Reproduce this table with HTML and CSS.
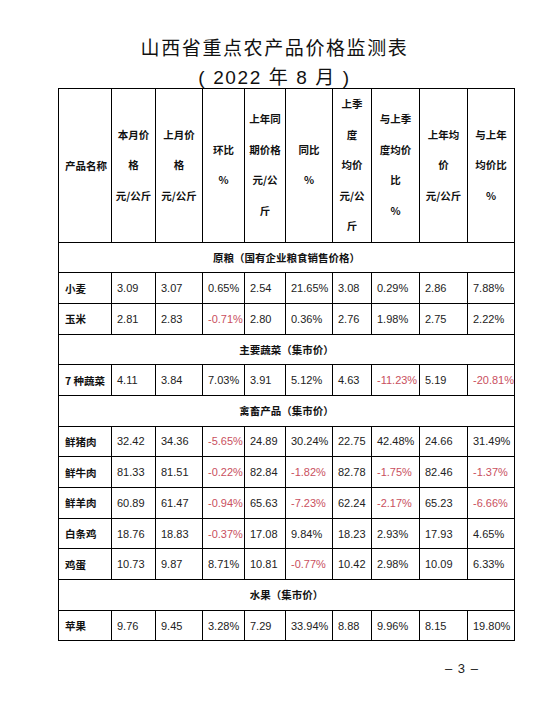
FILE: index.html
```html
<!DOCTYPE html>
<html lang="zh-CN">
<head>
<meta charset="utf-8">
<title>山西省重点农产品价格监测表</title>
<link rel="stylesheet" href="styles.css">
</head>
<body>
<div class="page">
  <div class="title">
    <div class="t1">山西省重点农产品价格监测表</div>
    <div class="t2">( 2022 年 8 月 )</div>
  </div>
  <table class="grid">
    <colgroup>
      <col class="c53"><col class="c44"><col class="c47"><col class="c42"><col class="c41">
      <col class="c47"><col class="c39"><col class="c48"><col class="c48"><col class="c47">
    </colgroup>
    <thead>
      <tr class="head">
        <th class="name">产品名称</th>
        <th><span>本月价</span><span>格</span><span>元/公斤</span></th>
        <th><span>上月价</span><span>格</span><span>元/公斤</span></th>
        <th><span>环比</span><span>%</span></th>
        <th><span>上年同</span><span>期价格</span><span>元/公</span><span>斤</span></th>
        <th><span>同比</span><span>%</span></th>
        <th><span>上季</span><span>度</span><span>均价</span><span>元/公</span><span>斤</span></th>
        <th><span>与上季</span><span>度均价</span><span>比</span><span>%</span></th>
        <th><span>上年均</span><span>价</span><span>元/公斤</span></th>
        <th><span>与上年</span><span>均价比</span><span>%</span></th>
      </tr>
    </thead>
    <tbody>
      <tr class="section"><td colspan="10">原粮（国有企业粮食销售价格）</td></tr>
      <tr><td class="name">小麦</td><td>3.09</td><td>3.07</td><td>0.65%</td><td>2.54</td><td>21.65%</td><td>3.08</td><td>0.29%</td><td>2.86</td><td>7.88%</td></tr>
      <tr><td class="name">玉米</td><td>2.81</td><td>2.83</td><td class="neg">-0.71%</td><td>2.80</td><td>0.36%</td><td>2.76</td><td>1.98%</td><td>2.75</td><td>2.22%</td></tr>
      <tr class="section"><td colspan="10">主要蔬菜（集市价）</td></tr>
      <tr><td class="name">7 种蔬菜</td><td>4.11</td><td>3.84</td><td>7.03%</td><td>3.91</td><td>5.12%</td><td>4.63</td><td class="neg">-11.23%</td><td>5.19</td><td class="neg">-20.81%</td></tr>
      <tr class="section"><td colspan="10">禽畜产品（集市价）</td></tr>
      <tr><td class="name">鲜猪肉</td><td>32.42</td><td>34.36</td><td class="neg">-5.65%</td><td>24.89</td><td>30.24%</td><td>22.75</td><td>42.48%</td><td>24.66</td><td>31.49%</td></tr>
      <tr><td class="name">鲜牛肉</td><td>81.33</td><td>81.51</td><td class="neg">-0.22%</td><td>82.84</td><td class="neg">-1.82%</td><td>82.78</td><td class="neg">-1.75%</td><td>82.46</td><td class="neg">-1.37%</td></tr>
      <tr><td class="name">鲜羊肉</td><td>60.89</td><td>61.47</td><td class="neg">-0.94%</td><td>65.63</td><td class="neg">-7.23%</td><td>62.24</td><td class="neg">-2.17%</td><td>65.23</td><td class="neg">-6.66%</td></tr>
      <tr><td class="name">白条鸡</td><td>18.76</td><td>18.83</td><td class="neg">-0.37%</td><td>17.08</td><td>9.84%</td><td>18.23</td><td>2.93%</td><td>17.93</td><td>4.65%</td></tr>
      <tr><td class="name">鸡蛋</td><td>10.73</td><td>9.87</td><td>8.71%</td><td>10.81</td><td class="neg">-0.77%</td><td>10.42</td><td>2.98%</td><td>10.09</td><td>6.33%</td></tr>
      <tr class="section"><td colspan="10">水果（集市价）</td></tr>
      <tr><td class="name">苹果</td><td>9.76</td><td>9.45</td><td>3.28%</td><td>7.29</td><td>33.94%</td><td>8.88</td><td>9.96%</td><td>8.15</td><td>19.80%</td></tr>
    </tbody>
  </table>
  <div class="pageno">– 3 –</div>
</div>
</body>
</html>
```

FILE: styles.css
```css
html, body {
  margin: 0;
  padding: 0;
  background: #ffffff;
}

.page {
  width: 549px;
  height: 715px;
  color: #111111;
  font-family: "Liberation Sans", "Noto Sans CJK SC", sans-serif;
}

.title {
  box-sizing: border-box;
  height: 88px;
  padding-top: 34px;
  text-align: center;
  font-family: "Liberation Sans", "Noto Sans CJK SC", sans-serif;
  font-size: 19px;
  line-height: 29px;
  letter-spacing: 1.6px;
  color: #111111;
}

.grid {
  margin-left: 58px;
  border-collapse: collapse;
  table-layout: fixed;
  width: 457px;
}

.c53 { width: 53px; }
.c44 { width: 44px; }
.c47 { width: 47px; }
.c42 { width: 42px; }
.c41 { width: 41px; }
.c39 { width: 39px; }
.c48 { width: 48px; }

.grid th,
.grid td {
  border: 1px solid #000000;
  padding: 0 0 0 5px;
  vertical-align: middle;
  text-align: left;
  white-space: nowrap;
  overflow: visible;
}

.grid td {
  height: 29.7px;
  font-size: 11px;
  color: #222222;
}

.head th {
  height: 148px;
  padding: 0;
  text-align: center;
  font-family: "Noto Sans CJK SC", sans-serif;
  font-weight: 700;
  font-size: 10.5px;
  color: #111111;
}

.head th span {
  display: block;
  line-height: 30.5px;
}

.head th.name {
  text-align: left;
  padding-left: 6px;
}

.grid td.name {
  padding-left: 6px;
  font-family: "Noto Sans CJK SC", sans-serif;
  font-weight: 700;
  font-size: 10.5px;
  color: #111111;
}

.section td {
  text-align: center;
  padding: 0;
  font-family: "Noto Sans CJK SC", sans-serif;
  font-weight: 700;
  font-size: 10.5px;
  color: #111111;
}

.grid td.neg {
  color: #c9505e;
}

.pageno {
  margin-top: 18px;
  padding-left: 445px;
  font-size: 13px;
  line-height: 20px;
  letter-spacing: 1px;
  color: #222222;
}
```
